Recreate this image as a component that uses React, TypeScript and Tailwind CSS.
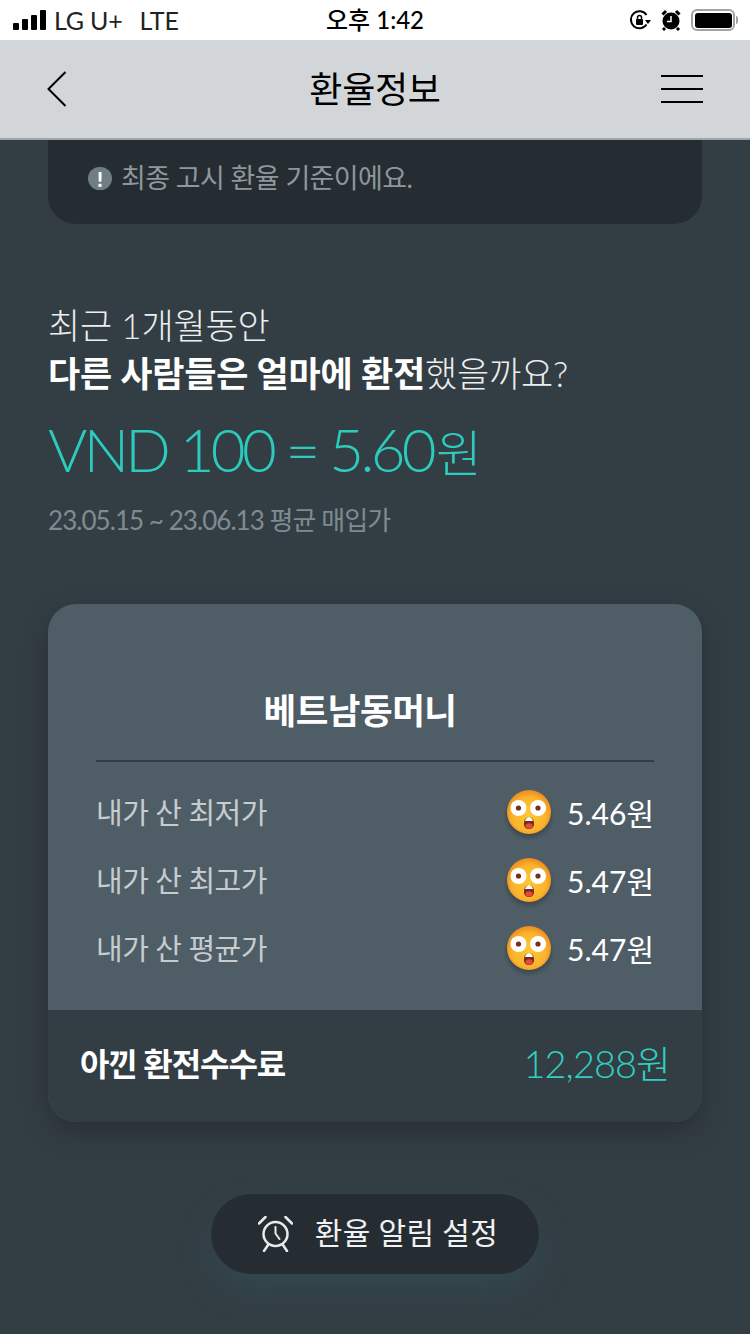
const FONT = { fontFamily: 'Lato, "Noto Sans CJK KR", sans-serif' };

const RATES = [
  { label: '내가 산 최저가', value: '5.46원' },
  { label: '내가 산 최고가', value: '5.47원' },
  { label: '내가 산 평균가', value: '5.47원' },
];

function StatusBar() {
  return (
    <div className="relative flex h-10 items-center justify-between bg-white pl-[13px] pr-[12px] text-black">
      <div className="flex items-center text-[25px] leading-none tracking-[-0.2px] text-[#222]">
        <div className="mr-[8px] flex items-end gap-[3px]">
          <span className="h-[7px] w-[6px] rounded-[1px] bg-black" />
          <span className="h-[11px] w-[6px] rounded-[1px] bg-black" />
          <span className="h-[15px] w-[6px] rounded-[1px] bg-black" />
          <span className="h-[20px] w-[6px] rounded-[1px] bg-black" />
        </div>
        <span>LG U+</span>
        <span className="ml-[17px]">LTE</span>
      </div>
      <span className="absolute left-[326px] top-[6px] text-[24px] font-medium leading-[28px]">오후 1:42</span>
      <div className="flex items-center gap-[10px]">
        <svg width="21" height="20" viewBox="0 0 21 20">
          <path d="M16.500 14.500A8.500 8.500 0 1 1 16.500 5" fill="none" stroke="black" strokeWidth="2" />
          <path d="M15 10h6l-3 4z" fill="black" />
          <rect x="6" y="9" width="7" height="6" rx="1" fill="black" />
          <path d="M7.500 9.500V7.500a2 2 0 0 1 4 0v2" fill="none" stroke="black" strokeWidth="1.500" />
        </svg>
        <svg width="20" height="22" viewBox="0 0 20 22">
          <circle cx="10" cy="12" r="8.500" fill="black" />
          <path d="M10 7v5.500H6" fill="none" stroke="white" strokeWidth="1.500" />
          <path d="M1.500 5.500l3.500-3.500M18.500 5.500l-3.500-3.500M4 19l-2 2M16 19l2 2" stroke="black" strokeWidth="3" />
        </svg>
        <div className="flex items-center">
          <div className="flex h-[22px] w-[44px] items-center justify-center rounded-[6px] border-2 border-[#a3a3a3]">
            <div className="h-[15px] w-[37px] rounded-[3px] bg-black" />
          </div>
          <span className="ml-[1px] h-[8px] w-[2px] rounded-r-sm bg-[#a3a3a3]" />
        </div>
      </div>
    </div>
  );
}

function NavBar() {
  return (
    <div className="flex h-[100px] items-center justify-between border-b-2 border-[#a2a8aa] bg-[#d3d6d8] px-[47px]">
      <div className="w-[42px]">
        <svg width="20" height="36" viewBox="0 0 20 36" fill="none" stroke="black" strokeWidth="2">
          <path d="M18.500 1 1.500 18l17 17" />
        </svg>
      </div>
      <h1 className="text-[36px] font-normal leading-none tracking-[-0.3px] text-black">환율정보</h1>
      <div className="flex h-[28px] w-[42px] flex-col justify-between">
        <span className="h-[2px] bg-black" />
        <span className="h-[2px] bg-black" />
        <span className="h-[2px] bg-black" />
      </div>
    </div>
  );
}

function SurprisedFace({ id }: { id: string }) {
  return (
    <svg width="52" height="56" viewBox="0 0 52 56" className="shrink-0">
      <defs>
        <radialGradient id={`${id}-face`} cx="50%" cy="55%" r="55%">
          <stop offset="0%" stopColor="#fdc92f" />
          <stop offset="70%" stopColor="#fab42e" />
          <stop offset="100%" stopColor="#ec8a1e" />
        </radialGradient>
        <radialGradient id={`${id}-shadow`} cx="50%" cy="50%" r="50%">
          <stop offset="60%" stopColor="#000" stopOpacity="0.35" />
          <stop offset="100%" stopColor="#000" stopOpacity="0" />
        </radialGradient>
      </defs>
      <ellipse cx="26" cy="31" rx="26" ry="25" fill={`url(#${id}-shadow)`} />
      <circle cx="26" cy="27" r="22" fill={`url(#${id}-face)`} />
      <circle cx="15.500" cy="23" r="8" fill="#fff" />
      <circle cx="35" cy="23" r="8" fill="#fff" />
      <circle cx="15.500" cy="23" r="2.600" fill="#74301a" />
      <circle cx="35" cy="23" r="2.600" fill="#74301a" />
      <path d="M21 39c0-5 2-7 5-7s5 2 5 7c0 3-2 5-5 5s-5-2-5-5z" fill="#7a2a18" />
      <path d="M22 36c1-3 2-4 4-4s3 1 4 4z" fill="#fff" />
      <ellipse cx="26" cy="41" rx="3.600" ry="2.800" fill="#e4493c" />
    </svg>
  );
}

export default function App() {
  return (
    <div className="h-[1334px] w-[750px] overflow-hidden bg-[#333e44]" style={FONT}>
      <StatusBar />
      <NavBar />

      <div className="mx-12 flex h-[84px] items-start gap-[9px] rounded-b-[28px] bg-[#262d32] pl-10 pt-[20px]">
        <span className="flex h-[36px] items-center">
          <span className="flex h-[23px] w-[24px] items-center justify-center rounded-full bg-[#6f7d85] text-[21px] font-black leading-none text-white">!</span>
        </span>
        <p className="text-[27px] leading-[36px] tracking-[-0.6px] text-[#8d979d]">최종 고시 환율 기준이에요.</p>
      </div>

      <section className="px-12 pt-[77px]">
        <p className="text-[35px] font-light leading-[48px] tracking-[-0.2px] text-[#eceeef]">최근 1개월동안</p>
        <p className="text-[35px] font-light leading-[48px] tracking-[-0.2px] text-[#eceeef]">
          <strong className="font-bold text-white">다른 사람들은 얼마에 환전</strong>했을까요?
        </p>
        <p className="mt-[17px] text-[60px] font-light leading-[70px] tracking-[-3.700px] text-[#2ccbbd]">
          VND 100 = 5.60<span className="ml-[3px] text-[50px] tracking-normal">원</span>
        </p>
        <p className="mt-[14px] text-[26px] leading-[36px] tracking-[-0.95px] text-[#7e8b92]">23.05.15 ~ 23.06.13 평균 매입가</p>
      </section>

      <section className="mx-12 mt-[66px] overflow-hidden rounded-[28px] bg-[#4f5e66] shadow-[0_10px_30px_rgba(0,0,0,0.25)]">
        <div className="px-12 pb-[27px] pt-[82px]">
          <h2 className="border-b-2 border-[#333e44] pb-[24px] pr-[30px] text-center text-[35.500px] font-bold leading-[50px] tracking-[-0.5px] text-white">베트남동머니</h2>
          <ul className="mt-[17px]">
            {RATES.map((rate, i) => (
              <li key={rate.label} className="flex h-[68px] items-center justify-between">
                <span className="text-[29px] tracking-[-0.5px] text-[#c6ccd0]">{rate.label}</span>
                <span className="flex items-center gap-[12px]">
                  <SurprisedFace id={`face-${i}`} />
                  <span className="text-[30px] text-white">{rate.value}</span>
                </span>
              </li>
            ))}
          </ul>
        </div>
        <div className="flex h-[112px] items-center justify-between bg-[#333e44] px-8 pb-[5px]">
          <span className="text-[32px] font-bold tracking-[-1.1px] text-white">아낀 환전수수료</span>
          <span className="text-[38px] font-light tracking-[-1px] text-[#2fd0c2]">12,288원</span>
        </div>
      </section>

      <div className="mt-[72px] flex justify-center">
        <button
          type="button"
          className="flex h-20 w-[328px] items-center justify-center gap-[22px] rounded-full bg-[#262d32] pl-[6px] shadow-[0_16px_30px_rgba(50,80,90,0.5)]"
        >
          <svg width="35" height="36" viewBox="0 0 35 36" fill="none" stroke="#e8eaeb" strokeWidth="2.500" strokeLinecap="round">
            <circle cx="17.500" cy="18" r="12" />
            <path d="M17.500 11v6.500l4 5.500" strokeWidth="2" />
            <path d="M1 7.500 7.500 1M34 7.500 27.500 1M10 29l-4 6M25 29l4 6" />
          </svg>
          <span className="pb-[4px] text-[30px] tracking-[0.3px] text-[#f1f2f3]">환율 알림 설정</span>
        </button>
      </div>
    </div>
  );
}
